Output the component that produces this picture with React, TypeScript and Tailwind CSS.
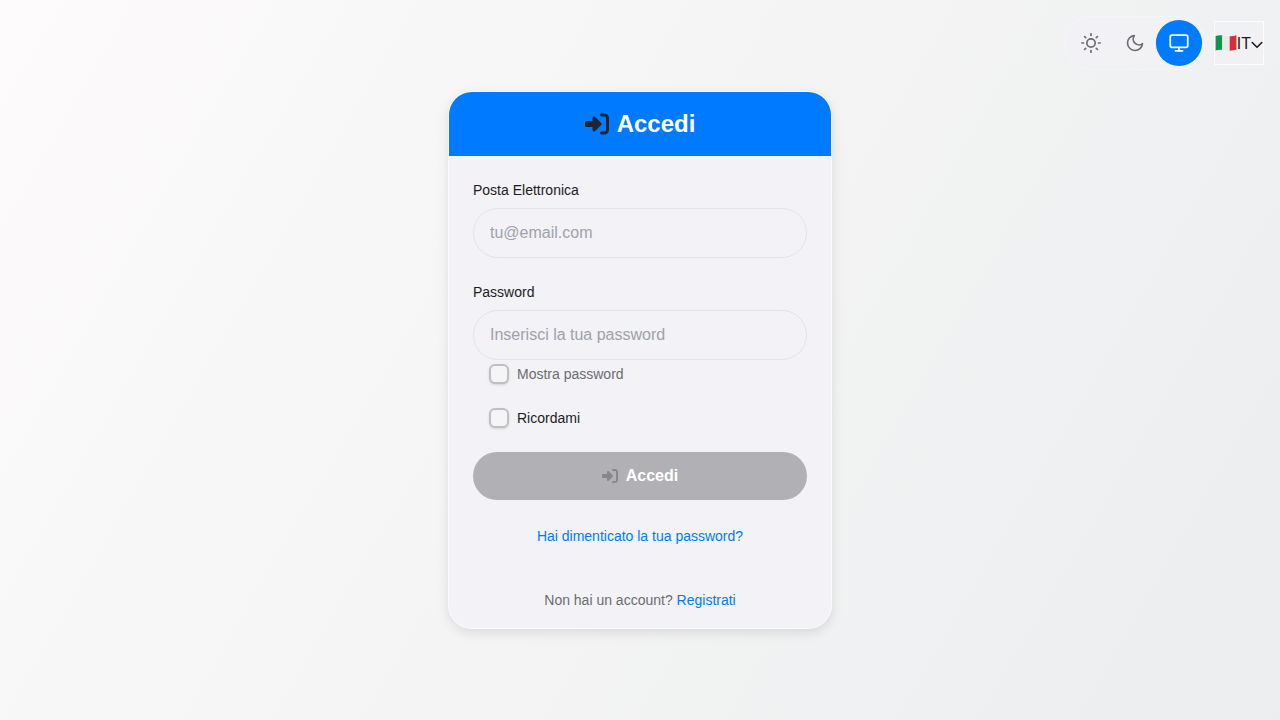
import { useState } from "react";
import { FaRightToBracket } from "react-icons/fa6";
import { FiMonitor, FiMoon, FiSun } from "react-icons/fi";

const themes = [
  { id: "light", label: "Chiaro", icon: FiSun },
  { id: "dark", label: "Scuro", icon: FiMoon },
  { id: "system", label: "Sistema", icon: FiMonitor },
];

function ItalianFlag() {
  return (
    <svg viewBox="0 0 22 16" className="h-4 w-[22px] shrink-0" aria-hidden="true">
      <path d="M.6 1.1C2.8.3 5 .1 7.3.4v14.4C5 14.5 2.8 14.7.6 15.5Z" fill="#0f9450" />
      <path d="M7.3.4c2.5.3 4.9 1 7.4.9v14.4c-2.5.1-4.9-.6-7.4-.9Z" fill="#e9e9ea" />
      <path d="M14.7 1.3C17 1.3 19.3 1 21.4.2v14.4c-2.1.8-4.4 1.1-6.7 1.1Z" fill="#d32f35" />
    </svg>
  );
}

function ThemeSwitcher() {
  const [theme, setTheme] = useState("system");

  return (
    <div className="flex items-center rounded-full border border-white/20 bg-[#f2f2f7]/70 p-1">
      {themes.map(({ id, label, icon: Icon }) => (
        <button
          key={id}
          type="button"
          aria-label={label}
          onClick={() => setTheme(id)}
          className={`flex size-11 items-center justify-center rounded-full ${
            theme === id ? "scale-105 bg-[#007aff] text-white" : "text-[#6c6c70]"
          }`}
        >
          <Icon size={20} />
        </button>
      ))}
    </div>
  );
}

function LanguageButton() {
  return (
    <button
      type="button"
      className="flex h-11 items-center border border-white/80 bg-[#f2f2f7]/60 text-base text-[#1c1c1e]"
    >
      <ItalianFlag />
      <span className="pt-px">IT</span>
      <svg viewBox="0 0 12 12" className="mt-1 size-3" fill="none" stroke="currentColor" strokeWidth="1.6" aria-hidden="true">
        <path d="m1.2 3.5 4.8 4.8 4.8-4.8" strokeLinecap="round" strokeLinejoin="round" />
      </svg>
    </button>
  );
}

function Field({ id, label, type, placeholder }: any) {
  return (
    <div>
      <label htmlFor={id} className="mb-2 block text-sm leading-5 text-[#1c1c1e]">
        {label}
      </label>
      <input
        id={id}
        type={type}
        placeholder={placeholder}
        className="block h-[50px] w-full rounded-full border border-[#e2e2e8] px-4 text-base text-[#1c1c1e] outline-none placeholder:text-[#a1a1a8] focus:border-[#007aff]"
      />
    </div>
  );
}

function Checkbox({ id, label, className, onChange }: any) {
  return (
    <div className="flex items-center gap-2 px-4">
      <input
        id={id}
        type="checkbox"
        onChange={onChange}
        className="size-5 appearance-none rounded-md border-2 border-[#c0c0c3] bg-[#f5f5f8] shadow-sm checked:border-[#007aff] checked:bg-[#007aff]"
      />
      <label htmlFor={id} className={`text-sm leading-5 ${className}`}>
        {label}
      </label>
    </div>
  );
}

export default function App() {
  const [showPassword, setShowPassword] = useState(false);

  return (
    <div className="flex min-h-screen flex-col bg-[linear-gradient(120deg,#fdfbfb_0%,#ebedee_100%)] font-['Liberation_Sans',Arial,sans-serif]">
      <header className="flex items-center justify-end gap-2 px-4 pt-4">
        <ThemeSwitcher />
        <LanguageButton />
      </header>

      <main className="flex justify-center px-4 pt-[21px] pb-8">
        <div className="w-full max-w-96 overflow-hidden rounded-3xl border border-white/70 bg-[#f2f2f7] shadow-[0_4px_12px_rgba(0,0,0,0.1)]">
          <div className="flex h-16 items-center justify-center gap-2 bg-[#007aff]">
            <FaRightToBracket className="size-6 text-[#1c2733]" />
            <h1 className="text-2xl font-bold text-white">Accedi</h1>
          </div>

          <form className="px-6 pt-6 pb-4" onSubmit={(e) => e.preventDefault()}>
            <Field id="email" label="Posta Elettronica" type="email" placeholder="tu@email.com" />
            <div className="mt-6">
              <Field
                id="password"
                label="Password"
                type={showPassword ? "text" : "password"}
                placeholder="Inserisci la tua password"
              />
            </div>
            <div className="mt-1 mb-6">
              <Checkbox
                id="show-password"
                label="Mostra password"
                className="text-[#6c6c70]"
                onChange={() => setShowPassword(!showPassword)}
              />
            </div>
            <Checkbox id="remember" label="Ricordami" className="text-[#1c1c1e]" />

            <button
              type="submit"
              disabled
              className="mt-6 flex h-12 w-full items-center justify-center gap-2 rounded-full bg-[#b0b0b5] text-base font-bold text-white"
            >
              <FaRightToBracket className="size-4 text-[#86888c]" />
              Accedi
            </button>

            <p className="mt-6 text-center text-sm leading-6">
              <a href="#" className="text-[#007aff]">
                Hai dimenticato la tua password?
              </a>
            </p>
            <p className="mt-10 text-center text-sm leading-6 text-[#6c6c70]">
              Non hai un account?{" "}
              <a href="#" className="text-[#007aff]">
                Registrati
              </a>
            </p>
          </form>
        </div>
      </main>
    </div>
  );
}
